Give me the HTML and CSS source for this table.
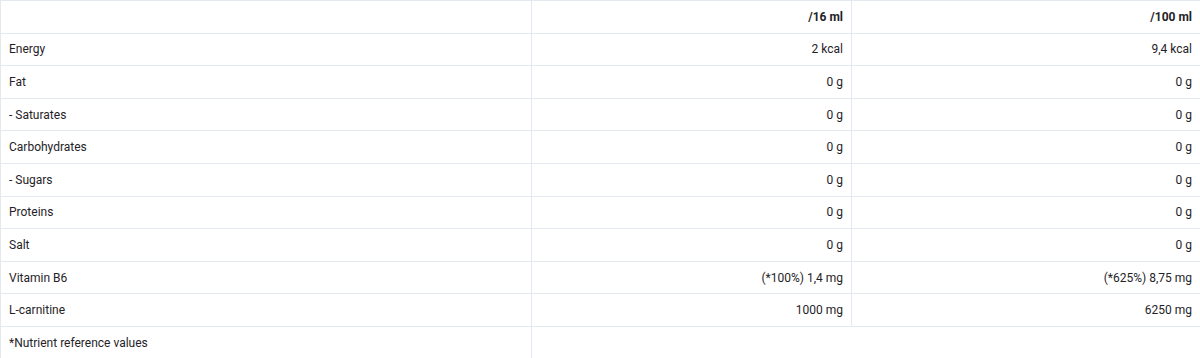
FILE: index.html
```html
<!DOCTYPE html>
<html lang="en">
<head>
<meta charset="utf-8">
<title>Nutrition</title>
<link rel="stylesheet" href="styles.css">
</head>
<body>
<table class="nutri">
  <colgroup>
    <col class="c1"><col class="c2"><col class="c3">
  </colgroup>
  <thead>
    <tr><th></th><th class="num">/16 ml</th><th class="num">/100 ml</th></tr>
  </thead>
  <tbody>
    <tr><td>Energy</td><td class="num">2 kcal</td><td class="num">9,4 kcal</td></tr>
    <tr><td>Fat</td><td class="num">0 g</td><td class="num">0 g</td></tr>
    <tr><td>- Saturates</td><td class="num">0 g</td><td class="num">0 g</td></tr>
    <tr><td>Carbohydrates</td><td class="num">0 g</td><td class="num">0 g</td></tr>
    <tr><td>- Sugars</td><td class="num">0 g</td><td class="num">0 g</td></tr>
    <tr><td>Proteins</td><td class="num">0 g</td><td class="num">0 g</td></tr>
    <tr><td>Salt</td><td class="num">0 g</td><td class="num">0 g</td></tr>
    <tr><td>Vitamin B6</td><td class="num">(*100%) 1,4 mg</td><td class="num">(*625%) 8,75 mg</td></tr>
    <tr><td>L-carnitine</td><td class="num">1000 mg</td><td class="num">6250 mg</td></tr>
    <tr class="foot"><td>*Nutrient reference values</td></tr>
  </tbody>
</table>
</body>
</html>
```
FILE: styles.css
```css
html, body {
  margin: 0;
  padding: 0;
  background: #ffffff;
}
body {
  font-family: "Roboto", "Liberation Sans", sans-serif;
  font-size: 12px;
  color: #1f2328;
}
.nutri {
  width: 1200px;
  border-collapse: collapse;
  table-layout: fixed;
}
.c1 { width: 531px; }
.c2 { width: 320px; }
.c3 { width: 349px; }
.nutri th,
.nutri td {
  border: 1px solid #e4e9f1;
  padding: 0 8px;
  height: 31.6px;
  line-height: 16px;
  text-align: left;
  font-weight: 400;
  vertical-align: middle;
}
.nutri th {
  font-weight: 700;
}
.nutri .num {
  text-align: right;
}
```
